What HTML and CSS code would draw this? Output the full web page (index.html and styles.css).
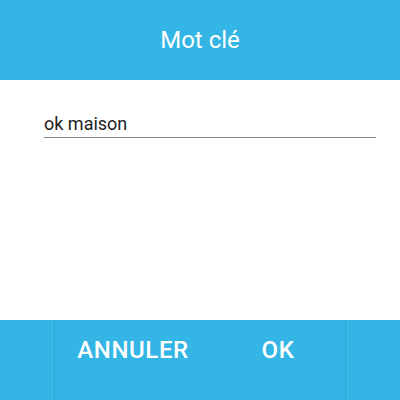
FILE: index.html
```html
<!DOCTYPE html>
<html>
<head>
<meta charset="utf-8">
<link rel="stylesheet" href="styles.css">
</head>
<body>
<div class="dialog">
  <header class="title-bar"><h1 class="title">Mot clé</h1></header>
  <main class="content">
    <div class="field">ok maison</div>
  </main>
  <footer class="actions">
    <div class="spacer-left"></div>
    <button class="btn">ANNULER</button>
    <button class="btn">OK</button>
    <div class="spacer-right"></div>
  </footer>
</div>
</body>
</html>
```
FILE: styles.css
```css
html, body {
  margin: 0;
  padding: 0;
  background: #ffffff;
}
.dialog {
  width: 400px;
  height: 400px;
  display: flex;
  flex-direction: column;
  font-family: Roboto, "Noto Sans", sans-serif;
}
.title-bar {
  height: 80px;
  background: #33b5e5;
  display: flex;
  align-items: center;
  justify-content: center;
}
.title {
  margin: 0;
  font-size: 24px;
  font-weight: 400;
  color: #ffffff;
  line-height: 28px;
}
.content {
  flex: 1;
  padding: 33px 24px 0 44px;
}
.field {
  font-size: 18px;
  line-height: 22px;
  color: #212121;
  padding-bottom: 2px;
  border-bottom: 1px solid #8a8a8a;
}
.actions {
  height: 80px;
  background: #33b5e5;
  display: flex;
}
.spacer-left {
  width: 54px;
  border-right: 1px solid #2ea2cd;
}
.spacer-right {
  flex: 1;
  border-left: 1px solid #2ea2cd;
}
.btn {
  width: 145px;
  border: none;
  background: transparent;
  color: #ffffff;
  font-family: Roboto, "Noto Sans", sans-serif;
  font-weight: 500;
  font-size: 24px;
  line-height: 28px;
  letter-spacing: 0.6px;
  padding: 16px 0 0 11px;
  margin: 0;
  display: flex;
  justify-content: center;
  align-items: flex-start;
}
```
